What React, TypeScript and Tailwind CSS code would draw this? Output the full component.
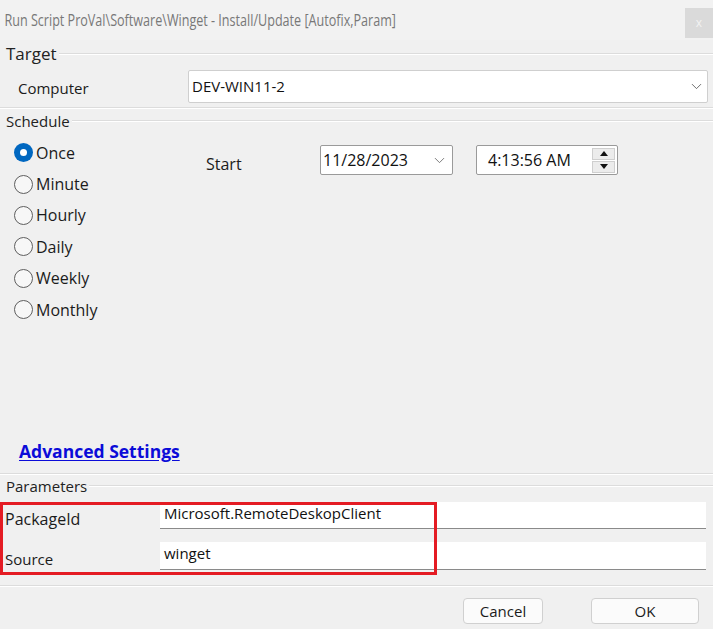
import { ChevronDown } from "lucide-react";

const font = "font-['Open_Sans','Noto_Sans',sans-serif]";

function GroupHeader({ label, className = "", size = "text-[15px]" }: { label: string; className?: string; size?: string }) {
  return (
    <div className={`flex items-center pl-[6px] ${className}`}>
      <span className={`${size} leading-[18px] text-[#222] pr-[2px]`}>{label}</span>
      <div className="flex-1 h-[2px] border-t border-[#dcdcdc] border-b border-b-white" />
    </div>
  );
}

function Separator({ className = "" }: { className?: string }) {
  return <div className={`h-[2px] border-t border-[#dcdcdc] border-b border-b-white ${className}`} />;
}

function Radio({ label, checked }: { label: string; checked?: boolean }) {
  return (
    <div className="h-[31.4px] flex items-center gap-[3px]">
      {checked ? (
        <span className="w-[19px] h-[19px] rounded-full bg-[#0067c0] flex items-center justify-center">
          <span className="w-[7px] h-[7px] rounded-full bg-white" />
        </span>
      ) : (
        <span className="w-[19px] h-[19px] rounded-full border border-[#5e5e5e] bg-[#f7f7f7]" />
      )}
      <span className="text-[16px] text-[#1b1b1b]">{label}</span>
    </div>
  );
}

export default function App() {
  return (
    <div className={`w-[713px] h-[629px] bg-[#f0f0f0] flex flex-col overflow-hidden relative ${font}`}>
      {/* title bar */}
      <div className="h-[40px] flex items-start justify-between bg-[#f2f2f2]">
        <span className="mt-[9px] pl-[6px] text-[17px] leading-[22px] text-[#787878] whitespace-nowrap origin-left scale-x-[0.74] font-['Open_Sans',sans-serif]">
          Run Script ProVal\Software\Winget - Install/Update [Autofix,Param]
        </span>
        <div className="mt-[8px] w-[28px] h-[30px] bg-[#dadada] flex items-center justify-center text-[12px] text-[#f2f2f2]">
          x
        </div>
      </div>

      {/* target */}
      <GroupHeader label="Target" size="text-[17px]" className="mt-[5px]" />
      <div className="mt-[7px] h-[33px] flex items-center">
        <span className="w-[188px] pl-[18px] pt-[3px] text-[15px] text-[#1b1b1b]">Computer</span>
        <div className="w-[520px] h-full bg-white border border-[#cfcfcf] rounded-[2px] flex items-center justify-between pl-[3px] pr-[2px]">
          <span className="text-[15px] text-[#111]">DEV-WIN11-2</span>
          <ChevronDown size={17} strokeWidth={1.2} className="text-[#555]" />
        </div>
      </div>
      <Separator className="mt-[4px]" />

      {/* schedule */}
      <GroupHeader label="Schedule" className="mt-[3px]" />
      <div className="h-[310px] flex">
        <div className="pl-[14px] pt-[7px] w-[206px] flex flex-col">
          <Radio label="Once" checked />
          <Radio label="Minute" />
          <Radio label="Hourly" />
          <Radio label="Daily" />
          <Radio label="Weekly" />
          <Radio label="Monthly" />
        </div>
        <span className="w-[114px] mt-[22px] text-[16px] text-[#1b1b1b] h-[22px]">Start</span>
        <div className="mt-[15px] h-[30px] w-[133px] bg-white border border-[#9a9a9a] rounded-[2px] flex items-center justify-between pl-[2px] pr-[4px]">
          <span className="text-[16px] text-[#111]">11/28/2023</span>
          <ChevronDown size={17} strokeWidth={1.2} className="text-[#666]" />
        </div>
        <div className="ml-[23px] mt-[15px] h-[30px] w-[142px] bg-white border border-[#9a9a9a] rounded-[2px] flex items-center justify-between pl-[11px] pr-[2px]">
          <span className="text-[16px] text-[#111]">4:13:56 AM</span>
          <div className="flex flex-col gap-[1px]">
            <div className="w-[23px] h-[12px] bg-[#ececec] border border-[#cfcfcf] flex items-center justify-center">
              <svg width="8" height="5" viewBox="0 0 8 5"><path d="M0 5 L4 0 L8 5 Z" fill="#111" /></svg>
            </div>
            <div className="w-[23px] h-[12px] bg-[#ececec] border border-[#cfcfcf] flex items-center justify-center">
              <svg width="8" height="5" viewBox="0 0 8 5"><path d="M0 0 L4 5 L8 0 Z" fill="#111" /></svg>
            </div>
          </div>
        </div>
      </div>

      <div className="h-[22px] pl-[19px] flex items-center">
        <span className="text-[17.5px] font-bold text-[#0b0bd8] underline underline-offset-[2px]">
          Advanced Settings
        </span>
      </div>

      <Separator className="mt-[11px]" />
      <GroupHeader label="Parameters" className="mt-[2px]" />

      <div className="mt-[7px] flex flex-col gap-[13px]">
        <div className="flex h-[27px]">
          <span className="w-[160px] pl-[5px] pt-[6px] text-[16px] leading-[22px] text-[#1b1b1b]">PackageId</span>
          <div className="w-[546px] bg-white border-b border-[#8a8a8a] flex items-start pl-[4px]">
            <span className="text-[15px] leading-[22px] text-[#111]">Microsoft.RemoteDeskopClient</span>
          </div>
        </div>
        <div className="flex h-[28px]">
          <span className="w-[160px] pl-[5px] pt-[6px] text-[15px] leading-[22px] text-[#1b1b1b]">Source</span>
          <div className="w-[546px] bg-white border-b border-[#8a8a8a] flex items-start pl-[4px]">
            <span className="text-[15px] leading-[22px] text-[#111]">winget</span>
          </div>
        </div>
      </div>

      <Separator className="mt-[15px]" />

      <div className="mt-[11px] flex justify-end gap-[48px] pr-[14px]">
        <button className="w-[80px] h-[26px] bg-[#fbfbfb] border border-[#d0d0d0] rounded-[4px] text-[15px] text-[#1b1b1b]">
          Cancel
        </button>
        <button className="w-[108px] h-[26px] bg-[#fbfbfb] border border-[#d0d0d0] rounded-[4px] text-[15px] text-[#1b1b1b]">
          OK
        </button>
      </div>

      {/* annotation box */}
      <div className="absolute left-0 top-[502px] w-[437px] h-[73px] border-[3px] border-[#e41b23] pointer-events-none" />
    </div>
  );
}
